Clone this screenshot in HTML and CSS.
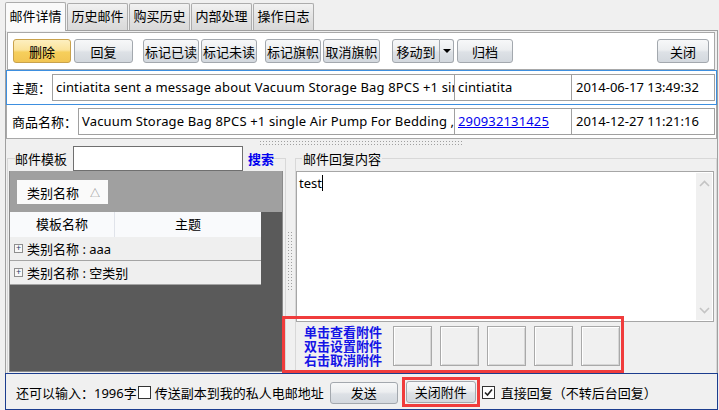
FILE: index.html
```html
<!DOCTYPE html>
<html lang="zh">
<head>
    <meta charset="UTF-8">
    <title>邮件详情</title>
    <link rel="stylesheet" href="styles.css">
</head>
<body>
    <div class="tabs">
        <div class="tab active">邮件详情</div>
        <div class="tab">历史邮件</div>
        <div class="tab">购买历史</div>
        <div class="tab">内部处理</div>
        <div class="tab">操作日志</div>
    </div>
    <div class="page">
        <div class="toolbar">
            <div class="grp g3">
                <button class="btn warn w58">删除</button>
                <button class="btn w59">回复</button>
            </div>
            <div class="grp">
                <button class="btn">标记已读</button>
                <button class="btn">标记未读</button>
            </div>
            <div class="grp g9">
                <button class="btn">标记旗帜</button>
                <button class="btn w57">取消旗帜</button>
            </div>
            <div class="grp g3 g13">
                <div class="split">
                    <button class="btn move">移动到</button>
                    <button class="btn drop"><span class="caret"></span></button>
                </div>
                <button class="btn">归档</button>
            </div>
            <button class="btn close">关闭</button>
        </div>
        <div class="info focus">
            <span class="lbl">主题：</span>
            <div class="field grow">cintiatita sent a message about Vacuum Storage Bag 8PCS +1 single Air Pump For Bedding</div>
            <div class="field who">cintiatita</div>
            <div class="field date">2014-06-17 13:49:32</div>
        </div>
        <div class="info">
            <span class="lbl">商品名称：</span>
            <div class="field grow">Vacuum Storage Bag 8PCS +1 single Air Pump For Bedding , Clothes</div>
            <div class="field who"><a href="#">290932131425</a></div>
            <div class="field date">2014-12-27 11:21:16</div>
        </div>
        <div class="hsplit"><span class="dots"></span></div>
        <div class="lower">
            <fieldset class="group tpl">
                <legend class="tpl-head">
                    <span>邮件模板</span>
                    <span class="search-box"></span>
                    <a href="#" class="search">搜索</a>
                </legend>
                <div class="grid">
                    <div class="band">
                        <span class="chip">类别名称<span class="sort">△</span></span>
                    </div>
                    <div class="grid-head">
                        <span class="c1">模板名称</span>
                        <span class="c2">主题</span>
                    </div>
                    <div class="grid-row"><span class="plus">+</span>类别名称 : aaa</div>
                    <div class="grid-row"><span class="plus">+</span>类别名称 : 空类别</div>
                </div>
            </fieldset>
            <div class="vsplit"><span class="vdots"></span></div>
            <fieldset class="group reply">
                <legend class="reply-head">邮件回复内容</legend>
                <div class="editor">
                    <div class="text">test<span class="cursor"></span></div>
                    <div class="scroll">
                        <svg width="11" height="7" viewBox="0 0 11 7"><path d="M1 6 L5.5 1.5 L10 6" fill="none" stroke="#c4c4c4" stroke-width="1.6"/></svg>
                        <svg width="11" height="7" viewBox="0 0 11 7"><path d="M1 1 L5.5 5.5 L10 1" fill="none" stroke="#c4c4c4" stroke-width="1.6"/></svg>
                    </div>
                </div>
                <div class="attach">
                    <div class="hint">单击查看附件<br>双击设置附件<br>右击取消附件</div>
                    <div class="slots">
                        <span class="slot"></span>
                        <span class="slot"></span>
                        <span class="slot"></span>
                        <span class="slot"></span>
                        <span class="slot"></span>
                    </div>
                </div>
            </fieldset>
            <div class="mark-box"></div>
        </div>
        <div class="footer">
            <span class="count">还可以输入：1996字</span>
            <span class="check"></span>
            <span>传送副本到我的私人电邮地址</span>
            <button class="btn send">发送</button>
            <span class="mark"><button class="btn attach-btn">关闭附件</button></span>
            <span class="check on">
                <svg width="11" height="11" viewBox="0 0 11 11"><path d="M2 5.5 L4.5 8 L9 2.5" fill="none" stroke="#222" stroke-width="1.6"/></svg>
            </span>
            <span>直接回复（不转后台回复）</span>
        </div>
    </div>
</body>
</html>
```

FILE: styles.css
```css
* { box-sizing: border-box; }
body {
    margin: 0;
    width: 719px;
    height: 410px;
    overflow: hidden;
    background: #f0f0f0;
    font: 13px "Noto Sans", "Noto Sans CJK SC", sans-serif;
    color: #000;
}

/* tabs */
.tabs {
    display: flex;
    align-items: flex-end;
    height: 30px;
    padding-left: 5px;
}
.tab {
    width: 61px;
    height: 27px;
    margin-right: 1px;
    border: 1px solid #acacac;
    border-bottom: none;
    border-radius: 2px 2px 0 0;
    background: linear-gradient(#f2f2f2, #e3e3e3 50%, #d9d9d9);
    text-align: center;
    line-height: 25px;
}
.tab.active {
    height: 29px;
    margin-bottom: -1px;
    position: relative;
    background: #fafafa;
    line-height: 27px;
}

.page {
    margin-left: 5px;
    width: 713px;
    height: 380px;
    border: 1px solid #a0a0a0;
    border-bottom: none;
    display: flex;
    flex-direction: column;
}

/* buttons */
.btn {
    height: 24px;
    width: 56px;
    padding: 0;
    font: inherit;
    color: #000;
    border: 1px solid #a3a8ae;
    border-radius: 3px;
    background: linear-gradient(#f7f8f9, #eceef0 45%, #dde1e6 55%, #d3d8de);
}
.btn.warn {
    border-color: #c9a24c;
    background: linear-gradient(#fdefc0, #fbe39a 45%, #f6cf5c 55%, #f2c552);
}
.w57 { width: 57px; }
.w58 { width: 58px; }
.w59 { width: 59px; }

.toolbar {
    margin: 1px 2px 0 1px;
    height: 38px;
    background: #fff;
    border: 1px solid #a8a8a8;
    display: flex;
    align-items: center;
    padding: 0 5px;
    gap: 10px;
}
.grp { display: flex; gap: 2px; }
.grp.g3 { gap: 3px; }
.g9 { margin-left: -2px; }
.g13 { margin-left: 2px; }
.split { display: flex; }
.btn.move {
    width: 48px;
    border-radius: 3px 0 0 3px;
}
.btn.drop {
    width: 14px;
    border-left: none;
    border-radius: 0 3px 3px 0;
    position: relative;
}
.caret {
    display: block;
    margin: 0 auto;
    width: 0;
    height: 0;
    border-left: 4px solid transparent;
    border-right: 4px solid transparent;
    border-top: 4px solid #000;
}
.btn.close {
    margin-left: auto;
    width: 52px;
}

/* info rows */
.info {
    height: 35px;
    background: #fff;
    border: 1px solid #a8a8a8;
    display: flex;
    align-items: center;
    padding: 0 1px 0 5px;
    margin-top: -1px;
}
.info.focus {
    margin-top: 0;
    border-color: #3d8fe0;
    position: relative;
}
.lbl { margin-right: 1px; white-space: nowrap; }
.field {
    height: 27px;
    border: 1px solid #a0a0a0;
    background: #fff;
    line-height: 25px;
    padding: 0 3px;
    white-space: nowrap;
    overflow: hidden;
    letter-spacing: 0.15px;
}
.field.grow { flex: 1; }
.field.who { width: 118px; margin-left: -1px; padding-left: 3px; }
.field.date { width: 144px; margin-left: -1px; padding-left: 4px; letter-spacing: 0; }
.field a { color: #0000ee; }

.hsplit {
    height: 7px;
    padding-left: 254px;
    padding-top: 2px;
}
.dots {
    display: block;
    width: 203px;
    height: 4px;
    background-image: linear-gradient(90deg, transparent 1px, #f0f0f0 1px), linear-gradient(#a0a0a0 1px, transparent 1px);
    background-size: 3px 3px;
}

/* lower area */
.lower {
    flex: 1;
    display: flex;
    position: relative;
}
.group {
    margin: 0;
    padding: 0 1px 1px;
    min-width: 0;
    border: 1px solid #d8d8d8;
    border-bottom: none;
    display: flex;
    flex-direction: column;
}
.tpl {
    width: 279px;
    margin-left: 1px;
}
.tpl-head {
    padding: 0;
    margin-left: 6px;
    height: 25px;
    display: flex;
    align-items: center;
}
.search-box {
    width: 170px;
    height: 25px;
    margin: 0 5px 0 6px;
    background: #fff;
    border: 1px solid #6f6f6f;
}
.search {
    color: #0000ee;
    font-weight: bold;
    text-decoration: none;
}

.grid {
    flex: 1;
    margin-right: 1px;
    background: #5a5a5a;
    border: 1px solid #8a8a8a;
    border-top: none;
    margin-left: 0;
}
.band {
    height: 41px;
    background: #a0a0a0;
    padding: 9px 0 0 7px;
}
.chip {
    display: flex;
    align-items: center;
    width: 91px;
    height: 24px;
    background: #fafafa;
    padding-left: 10px;
}
.sort {
    margin-left: auto;
    margin-right: 8px;
    font-size: 10px;
    color: #8a8a8a;
}
.grid-head {
    width: 251px;
    height: 25px;
    display: flex;
    background: #f9fafc;
    line-height: 25px;
}
.grid-head .c1 {
    width: 105px;
    text-align: center;
    border-right: 1px solid #e0e3ea;
}
.grid-head .c2 { flex: 1; text-align: center; }
.grid-row {
    width: 251px;
    height: 24px;
    background: #efefef;
    border-bottom: 1px solid #a4a4a4;
    display: flex;
    align-items: center;
    padding-left: 4px;
}
.plus {
    width: 9px;
    height: 9px;
    border: 1px solid #8e8e8e;
    background: #f8f8f8;
    font-size: 9px;
    line-height: 6px;
    text-align: center;
    color: #2a3d6a;
    margin-right: 4px;
}

.vsplit {
    width: 9px;
    padding: 86px 0 0 2px;
}
.vdots {
    display: block;
    width: 4px;
    height: 58px;
    background-image: linear-gradient(90deg, transparent 1px, #f0f0f0 1px), linear-gradient(#a0a0a0 1px, transparent 1px);
    background-size: 3px 3px;
}

.reply {
    flex: 1;
    margin-right: 0;
    padding: 0 2px 0 0;
}
.reply-head {
    padding: 0 1px;
    margin-left: 6px;
    height: 25px;
    line-height: 26px;
}
.editor {
    height: 151px;
    background: #fff;
    border: 1px solid #a6a6a6;
    display: flex;
}
.text {
    flex: 1;
    padding: 3px 0 0 2px;
    line-height: 17px;
}
.cursor {
    display: inline-block;
    width: 1px;
    height: 16px;
    background: #000;
    vertical-align: -3px;
}
.scroll {
    width: 16px;
    margin: 1px 1px 1px 0;
    background: #f0f0f0;
    display: flex;
    flex-direction: column;
    justify-content: space-between;
    align-items: center;
    padding: 7px 0 6px;
}
.attach {
    flex: 1;
    display: flex;
    padding: 3px 0 0 8px;
}
.hint {
    color: #1414e6;
    font-weight: bold;
    line-height: 14px;
    width: 89px;
}
.slots { display: flex; gap: 8px; padding-top: 1px; }
.slot {
    width: 39px;
    height: 40px;
    border: 1px solid #a9a9a9;
    box-shadow: inset 1px 1px 0 #fff, inset -1px -1px 0 #d6d6d6;
}

/* red annotation over the attachment area */
.mark-box {
    position: absolute;
    left: 276px;
    top: 170px;
    width: 342px;
    height: 57px;
    border: 3px solid #f03c3c;
}

/* footer */
.footer {
    height: 37px;
    margin: 0 -1px;
    border: 1px solid #1c3d8e;
    display: flex;
    align-items: center;
    padding: 2px 0 0 10px;
    white-space: nowrap;
}
.count { margin-right: 1px; }
.check {
    width: 13px;
    height: 13px;
    border: 1px solid #333;
    background: #fff;
    margin-right: 4px;
    display: flex;
    align-items: center;
    justify-content: center;
}
.check.on { margin: 0 6px 0 2px; }
.btn.send {
    width: 68px;
    height: 22px;
    margin-left: 6px;
}
.mark {
    margin-left: 4px;
    border: 3px solid #f03c3c;
    padding: 1px;
    margin-top: -2px;
}
.btn.attach-btn {
    display: block;
    width: 70px;
    height: 22px;
}
```
